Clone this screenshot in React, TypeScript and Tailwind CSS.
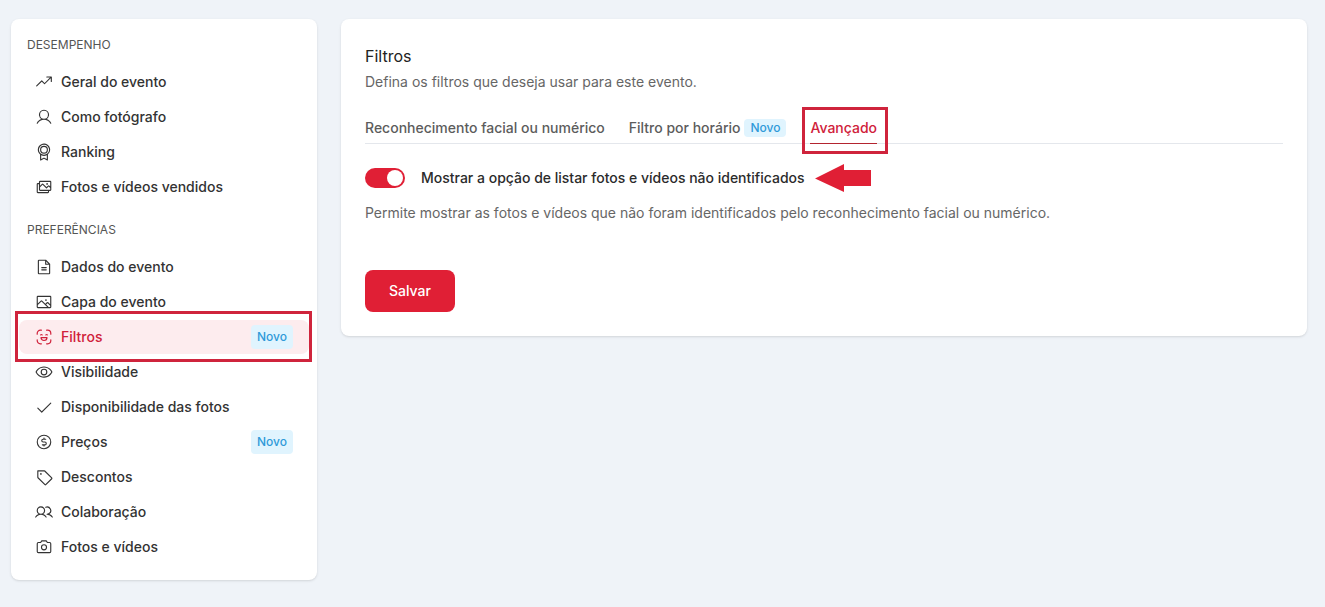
import { useState } from "react";
import type { ReactNode } from "react";
import {
  PiCamera,
  PiCheck,
  PiCurrencyCircleDollar,
  PiEye,
  PiFileText,
  PiImage,
  PiImages,
  PiMedal,
  PiTag,
  PiTrendUp,
  PiUser,
  PiUsers,
} from "react-icons/pi";

function FaceScanIcon() {
  return (
    <svg
      width="18"
      height="18"
      viewBox="0 0 18 18"
      fill="none"
      stroke="currentColor"
      strokeWidth="1.2"
      strokeLinecap="round"
      strokeLinejoin="round"
      aria-hidden
    >
      <path d="M2.2 6.2V5.4a3.2 3.2 0 0 1 3.2-3.2h1M11.6 2.2h1a3.2 3.2 0 0 1 3.2 3.2v.8M15.8 11.8v.8a3.2 3.2 0 0 1-3.2 3.2h-1M6.4 15.8h-1a3.2 3.2 0 0 1-3.2-3.2v-.8" />
      <path d="M5.6 6.9q.8-.7 1.6 0M10.8 6.9q.8-.7 1.6 0" />
      <path d="M6 9.6h6c0 1.7-1.3 2.9-3 2.9s-3-1.2-3-2.9z" />
    </svg>
  );
}

type Item = { label: string; icon: ReactNode; isNew?: boolean; active?: boolean };

const performance: Item[] = [
  { label: "Geral do evento", icon: <PiTrendUp size={18} /> },
  { label: "Como fotógrafo", icon: <PiUser size={18} /> },
  { label: "Ranking", icon: <PiMedal size={18} /> },
  { label: "Fotos e vídeos vendidos", icon: <PiImages size={18} /> },
];

const preferences: Item[] = [
  { label: "Dados do evento", icon: <PiFileText size={18} /> },
  { label: "Capa do evento", icon: <PiImage size={18} /> },
  { label: "Filtros", icon: <FaceScanIcon />, isNew: true, active: true },
  { label: "Visibilidade", icon: <PiEye size={18} /> },
  { label: "Disponibilidade das fotos", icon: <PiCheck size={18} /> },
  { label: "Preços", icon: <PiCurrencyCircleDollar size={18} />, isNew: true },
  { label: "Descontos", icon: <PiTag size={18} /> },
  { label: "Colaboração", icon: <PiUsers size={18} /> },
  { label: "Fotos e vídeos", icon: <PiCamera size={18} /> },
];

function Section({ title, items }: { title: string; items: Item[] }) {
  return (
    <section>
      <h2 className="mb-2.5 px-4 text-xs leading-5 text-[#555]">{title}</h2>
      <ul className="flex flex-col gap-px px-2">
        {items.map(({ label, icon, isNew, active }) => (
          <li key={label} className="relative">
            <a
              href="#"
              aria-current={active ? "page" : undefined}
              className={`flex h-[34px] items-center gap-2 rounded-lg px-4 text-sm font-medium ${
                active ? "bg-[#fdecee] text-[#d0213a]" : "text-[#333]"
              }`}
            >
              <span className="shrink-0">{icon}</span>
              <span className="grow">{label}</span>
              {isNew && (
                <span className="rounded-sm bg-[#e0f4fe] px-1.5 text-xs leading-6 text-[#2f9ad9]">Novo</span>
              )}
            </a>
            {active && (
              <span className="pointer-events-none absolute -top-[9px] -right-[3px] -bottom-2 -left-1 z-10 border-3 border-[#cf243c]" />
            )}
          </li>
        ))}
      </ul>
    </section>
  );
}

function Tab({ selected, children }: { selected?: boolean; children: ReactNode }) {
  return (
    <button
      type="button"
      role="tab"
      aria-selected={!!selected}
      className={`relative -mb-px flex h-8 items-center gap-1 border-b text-sm font-medium ${
        selected ? "border-[#b3242f] text-[#d0213a]" : "border-transparent text-[#5c5c5c]"
      }`}
    >
      {children}
      {selected && (
        <span className="pointer-events-none absolute -top-[5px] -right-[11px] -bottom-[11px] -left-2 border-3 border-[#cf243c]" />
      )}
    </button>
  );
}

export default function App() {
  const [listed, setListed] = useState(true);

  return (
    <div className="flex min-h-screen items-start gap-6 bg-[#eff3f8] pt-[19px] pr-[18px] pb-6 pl-[11px] font-['Inter',sans-serif]">
      <nav className="flex w-[306px] shrink-0 flex-col gap-4 rounded-lg bg-white py-4 shadow-sm">
        <Section title="DESEMPENHO" items={performance} />
        <Section title="PREFERÊNCIAS" items={preferences} />
      </nav>

      <main className="min-w-0 grow rounded-lg bg-white p-6 shadow-sm">
        <h1 className="text-base leading-[26px] text-[#222]">Filtros</h1>
        <p className="mt-0.5 text-sm leading-[22px] text-[#666]">Defina os filtros que deseja usar para este evento.</p>

        <div role="tablist" className="mt-[19px] flex gap-6 border-b border-[#e4e7ec]">
          <Tab>Reconhecimento facial ou numérico</Tab>
          <Tab>
            Filtro por horário
            <span className="rounded-sm bg-[#e0f4fe] px-1.5 text-xs leading-[18px] text-[#2f9ad9]">Novo</span>
          </Tab>
          <Tab selected>Avançado</Tab>
        </div>

        <div className="mt-6 flex h-5 items-center">
          <label className="flex cursor-pointer items-center gap-4 text-sm font-medium text-[#2b2b2b]">
            <input
              type="checkbox"
              role="switch"
              checked={listed}
              onChange={(e) => setListed(e.target.checked)}
              className="flex h-5 w-10 shrink-0 appearance-none items-center rounded-full bg-gray-300 p-0.5 before:size-4 before:rounded-full before:bg-white checked:justify-end checked:bg-[#e01f35]"
            />
            Mostrar a opção de listar fotos e vídeos não identificados
          </label>
          <svg width="56" height="28" viewBox="0 0 56 28" className="ml-2.5 shrink-0 fill-[#e01f35]" aria-hidden>
            <path d="M0 14.5 29 0v6h27v16H29v6z" />
          </svg>
        </div>
        <p className="mt-3.5 text-sm leading-[22px] text-[#666]">
          Permite mostrar as fotos e vídeos que não foram identificados pelo reconhecimento facial ou numérico.
        </p>

        <button type="button" className="mt-[46px] block h-[42px] rounded-lg bg-[#e01f35] px-6 text-sm font-medium text-white">
          Salvar
        </button>
      </main>
    </div>
  );
}
